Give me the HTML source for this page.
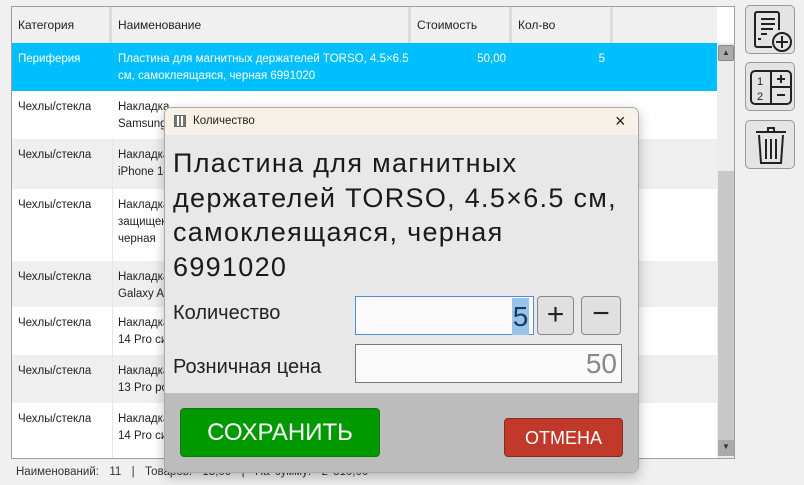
<!DOCTYPE html>
<html><head><meta charset="utf-8"><style>
*{box-sizing:border-box;margin:0;padding:0}
body{width:804px;height:485px;background:#f0f0f0;font-family:"Liberation Sans","DejaVu Sans",sans-serif;position:relative;overflow:hidden;color:#222}
.abs{position:absolute}
.tbl{left:11px;top:6px;width:724px;height:453px;border:1px solid #a0a0a0;background:#fff;overflow:hidden}
.hdr{left:0;top:0;height:36px;width:705px;background:#f0f0f0;font-size:12px}
.hdr div{position:absolute;top:0;height:36px;line-height:36px;padding-left:6px;border-right:3px solid #dcdcdc}
.row{position:absolute;left:0;width:705px;font-size:11.5px;line-height:17px}
.row div{position:absolute;top:8px}
.c1{left:6px}.c2{left:106px}
.sb{left:705px;top:36px;width:18px;height:417px;background:#ececec}
.btn{width:50px;height:49px;border:1px solid #999;border-radius:5px;background:#e4e4e4;left:745px}
</style></head><body>
<div class="abs tbl">
 <div class="abs hdr">
  <div style="left:0;width:100px">Категория</div>
  <div style="left:100px;width:299px">Наименование</div>
  <div style="left:399px;width:101px">Стоимость</div>
  <div style="left:500px;width:101px">Кол-во</div>
  <div style="left:601px;width:104px;border:none"></div>
 </div>
 <div class="abs" style="left:100px;top:36px;width:1px;height:417px;background:#e6e6e6"></div>
 <div class="row" style="top:36px;height:48px;background:#00bfff;color:#fff"><div class="c1">Периферия</div><div class="c2" style="width:300px">Пластина для магнитных держателей TORSO, 4.5×6.5 см, самоклеящаяся, черная 6991020</div><div style="left:440px;width:54px;text-align:right">50,00</div><div style="left:540px;width:53px;text-align:right">5</div></div>
 <div class="row" style="top:84px;height:48px;background:#fff;border-left:100px solid transparent"></div>
 <div class="row" style="top:84px;height:48px"><div class="c1">Чехлы/стекла</div><div class="c2">Накладка<br>Samsung</div></div>
 <div class="row" style="top:132px;height:50px;background:linear-gradient(90deg,#efefef 100px,#e6e6e6 100px,#e6e6e6 101px,#efefef 101px)"><div class="c1">Чехлы/стекла</div><div class="c2">Накладка<br>iPhone 14</div></div>
 <div class="row" style="top:182px;height:72px"><div class="c1">Чехлы/стекла</div><div class="c2">Накладка<br>защищен<br>черная</div></div>
 <div class="row" style="top:254px;height:46px;background:linear-gradient(90deg,#efefef 100px,#e6e6e6 100px,#e6e6e6 101px,#efefef 101px)"><div class="c1">Чехлы/стекла</div><div class="c2">Накладка<br>Galaxy A</div></div>
 <div class="row" style="top:300px;height:48px"><div class="c1">Чехлы/стекла</div><div class="c2">Накладка<br>14 Pro си</div></div>
 <div class="row" style="top:348px;height:48px;background:linear-gradient(90deg,#efefef 100px,#e6e6e6 100px,#e6e6e6 101px,#efefef 101px)"><div class="c1">Чехлы/стекла</div><div class="c2">Накладка<br>13 Pro ро</div></div>
 <div class="row" style="top:396px;height:57px"><div class="c1">Чехлы/стекла</div><div class="c2">Накладка<br>14 Pro си</div></div>
 <div class="abs sb"><div class="abs" style="left:1px;top:2px;width:16px;height:16px;background:#aaa;border:1px solid #888;border-radius:2px;color:#333;font-size:8px;text-align:center;line-height:14px">▲</div>
 <div class="abs" style="left:1px;top:128px;width:16px;height:272px;background:#c8c8c8"></div>
 <div class="abs" style="left:1px;top:397px;width:16px;height:16px;background:#aaa;color:#333;font-size:8px;text-align:center;line-height:14px">▼</div></div>
</div>
<div class="abs" style="left:16px;top:466px;font-size:11.5px;color:#333;word-spacing:2px">Наименований: &nbsp;11 &nbsp;| &nbsp;Товаров: &nbsp;15,00 &nbsp;| &nbsp;На сумму: &nbsp;2 810,00</div>

<div class="abs btn" style="top:5px"><svg width="50" height="49" viewBox="0 0 50 49" fill="none" stroke="#222" stroke-width="2"><path d="M26 41H11a2 2 0 0 1-2-2V8a2 2 0 0 1 2-2h20a2 2 0 0 1 2 2v16"/><path d="M15 13h14M15 18h14M15 23h12M15 28h6M12 33h3"/><circle cx="36" cy="36" r="9"/><path d="M36 30v12M30 36h12"/></svg></div>
<div class="abs btn" style="top:62px"><svg width="50" height="49" viewBox="0 0 50 49" fill="none" stroke="#222" stroke-width="2"><rect x="5" y="8" width="40" height="33" rx="4"/><path d="M25 8v33M25 24h20M31 16h8M35 12v8M31 32h8"/><text x="11" y="22" font-size="11" fill="#222" stroke="none" font-family="Liberation Sans">1</text><text x="11" y="37" font-size="11" fill="#222" stroke="none" font-family="Liberation Sans">2</text></svg></div>
<div class="abs btn" style="top:120px"><svg width="50" height="49" viewBox="0 0 50 49" fill="none" stroke="#222" stroke-width="2"><path d="M10 11h30M22 11V7h6v4M13 14l2 28h20l2-28M20 18v20M25 18v20M30 18v20"/></svg></div>

<div class="abs" style="left:164px;top:107px;width:475px;height:366px;border:1px solid #aaa;border-radius:7px;overflow:hidden;box-shadow:0 4px 12px rgba(0,0,0,.25);background:#e8e8e8">
 <div class="abs" style="left:0;top:0;width:475px;height:27px;background:#f7f1e8;font-size:11.5px;line-height:27px;padding-left:28px">Количество
  <div class="abs" style="left:9px;top:7px;width:12px;height:12px;border:1px solid #666;background:repeating-linear-gradient(90deg,#777 0 2px,#fff 2px 4px)"></div>
  <div class="abs" style="left:450px;top:0;font-size:18px;color:#222">×</div>
 </div>
 <div class="abs" style="left:8px;top:38px;width:470px;font-size:27px;line-height:34.5px;color:#1a1a1a;white-space:nowrap;letter-spacing:1.3px">Пластина для магнитных<br>держателей TORSO, 4.5×6.5 см,<br>самоклеящаяся, черная<br>6991020</div>
 <div class="abs" style="left:8px;top:194px;font-size:20px">Количество</div>
 <div class="abs" style="left:8px;top:248px;font-size:20px">Розничная цена</div>
 <div class="abs" style="left:190px;top:188px;width:179px;height:39px;border:1px solid #4a90d9;background:#fafafa"><div class="abs" style="right:4px;top:1px;width:17px;height:37px;background:#99c4ea;font-size:28px;line-height:37px;color:#1a3a66;text-align:center">5</div></div>
 <div class="abs" style="left:372px;top:188px;width:37px;height:39px;border:1px solid #888;border-radius:4px;background:#e0e0e0;font-size:30px;line-height:36px;text-align:center">+</div>
 <div class="abs" style="left:416px;top:188px;width:40px;height:39px;border:1px solid #888;border-radius:4px;background:#e0e0e0;font-size:30px;line-height:34px;text-align:center">−</div>
 <div class="abs" style="left:190px;top:236px;width:267px;height:39px;border:1px solid #777;background:#fafafa;font-size:28px;line-height:37px;text-align:right;padding-right:4px;color:#888">50</div>
 <div class="abs" style="left:0;top:285px;width:475px;height:81px;background:#bcbcbc">
  <div class="abs" style="left:15px;top:15px;width:200px;height:49px;background:#009900;border:1px solid #0a7a0a;border-radius:4px;color:#fff;font-size:24px;line-height:47px;text-align:center">СОХРАНИТЬ</div>
  <div class="abs" style="left:339px;top:25px;width:119px;height:39px;background:#c0392b;border:1px solid #8a2a20;border-radius:4px;color:#fff;font-size:18px;line-height:38px;text-align:center">ОТМЕНА</div>
 </div>
</div>
</body></html>
